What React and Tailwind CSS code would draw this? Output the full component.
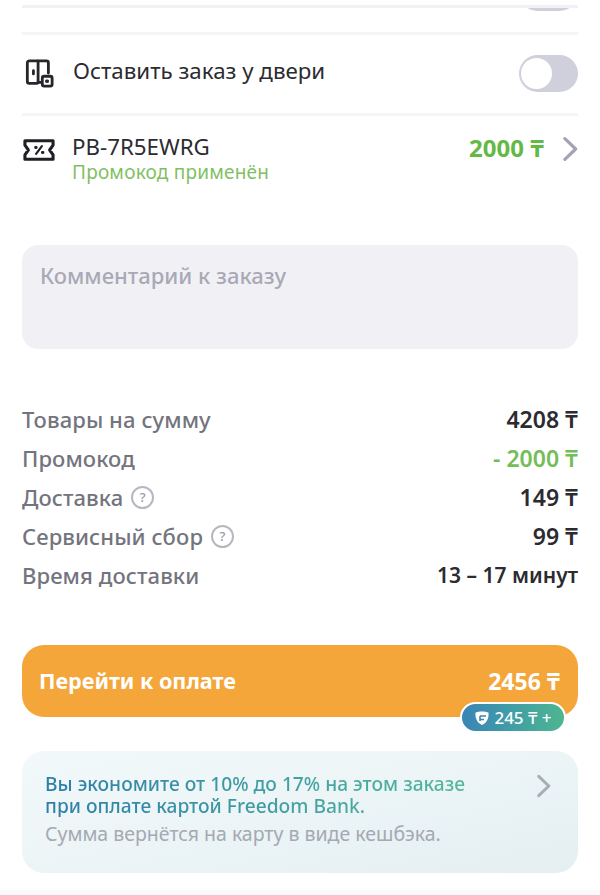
const F = { fontFamily: '"Noto Sans", "Open Sans", sans-serif' };

function Toggle() {
  return (
    <div className="flex h-[37px] w-[59px] shrink-0 items-center rounded-full bg-[#d0d0dd] pl-[2px]">
      <div className="h-[31px] w-[31px] rounded-full bg-white" />
    </div>
  );
}

function Chevron({ className, color = "#a3a3b4" }) {
  return (
    <svg className={className} viewBox="0 0 16 26" fill="none">
      <path d="M2 2L13.5 13L2 24" stroke={color} strokeWidth="3.4" strokeLinecap="round" strokeLinejoin="round" />
    </svg>
  );
}

function Help() {
  return (
    <span className="flex h-[23px] w-[23px] items-center justify-center rounded-full border-2 border-[#b7b7c0] text-[13px] font-medium leading-none text-[#9a9aa4]">
      ?
    </span>
  );
}

function Row({ label, value, help, valueClass = "text-[23px] font-semibold text-[#2b2b30]" }) {
  return (
    <div className="flex h-[39px] items-center justify-between">
      <div className="flex items-center gap-2 text-[22px] font-medium tracking-[0.1px] text-[#74747e]">
        <span>{label}</span>
        {help && <Help />}
      </div>
      <div className={valueClass}>{value}</div>
    </div>
  );
}

export default function App() {
  return (
    <div className="h-[895px] w-[600px] overflow-hidden bg-white" style={F}>
      <div className="mx-[22px]">
        <div className="h-[8px] border-b-[3px] border-[#f1f1f3]" />
        <div className="flex h-[27px] justify-end overflow-hidden border-b-[3px] border-[#f5f5f7]">
          <div className="-mt-[34px]">
            <Toggle />
          </div>
        </div>

        <div className="flex h-[81px] items-start justify-between border-b-[3px] border-[#f5f5f7] pt-[20px]">
          <div className="flex items-center gap-[19px]">
            <svg className="ml-[3px] mt-[3px] h-[30px] w-[29px]" viewBox="0 0 31 31" fill="none" stroke="#26262b" strokeWidth="3" strokeLinejoin="round" strokeLinecap="round">
              <path d="M13 2.500H4.500a2 2 0 0 0-2 2v20a2 2 0 0 0 2 2H13a1 1 0 0 0 1-1V3.500a1 1 0 0 0-1-1Z" />
              <path d="M14 2.500h9a2 2 0 0 1 2 2v11" />
              <path d="M14 25.500h3" />
              <path d="M9 13v3.500" />
              <rect x="18.500" y="19" width="10.500" height="10.500" rx="2" />
              <rect x="22.500" y="23" width="2.500" height="2.500" fill="#26262b" strokeWidth="1" />
            </svg>
            <span className="-mt-[1px] text-[22.300px] leading-none text-[#2b2b30]">Оставить заказ у двери</span>
          </div>
          <Toggle />
        </div>

        <div className="flex h-[69px] justify-between pt-[17px]">
          <div className="flex gap-[17px]">
            <svg className="ml-[1px] mt-[5px] h-[24px] w-[32px]" viewBox="0 0 33 24" fill="none" stroke="#1f1f24" strokeWidth="3.2" strokeLinejoin="round" strokeLinecap="round">
              <path d="M2 2.500h29v4.500l-3.500 5 3.500 5v4.500H2V17l3.500-5L2 7Z" />
              <path d="M13.500 16l6-8" strokeWidth="2.2" />
              <path d="M13 9.500h.6M20 14.500h.6" strokeWidth="3" />
            </svg>
            <div className="flex flex-col">
              <span className="text-[22.300px] leading-[28px] text-[#2b2b30]">PB-7R5EWRG</span>
              <span className="text-[19px] leading-[22px] tracking-[0.2px] text-[#82bf64]">Промокод применён</span>
            </div>
          </div>
          <div className="flex items-start gap-[19px]">
            <span className="text-[24px] font-bold leading-[30px] text-[#63b946]">2000 ₸</span>
            <Chevron className="mt-[3px] h-[26px] w-[15px]" />
          </div>
        </div>

        <div className="mt-[60px] h-[104px] rounded-[16px] bg-[#f1f1f5] px-[18px] py-[15px] text-[22px] font-medium leading-[30px] text-[#a9a9b5]">
          Комментарий к заказу
        </div>

        <div className="mt-[51px]">
          <Row label="Товары на сумму" value="4208 ₸" />
          <Row label="Промокод" value="- 2000 ₸" valueClass="text-[23px] font-semibold text-[#74bd58]" />
          <Row label="Доставка" value="149 ₸" help />
          <Row label="Сервисный сбор" value="99 ₸" help />
          <Row label="Время доставки" value="13 – 17 минут" valueClass="text-[21px] font-semibold text-[#2b2b30]" />
        </div>

        <div className="relative mt-[50px]">
          <div className="flex h-[72px] items-center justify-between rounded-[22px] bg-[#f4a63a] pl-[17px] pr-[18px] text-[21.600px] font-bold text-white">
            <span className="pt-[1px]">Перейти к оплате</span>
            <span className="text-[23px]">2456 ₸</span>
          </div>
          <div className="absolute left-[438px] top-[57px] flex h-[31px] w-[106px] items-center justify-center gap-[4px] rounded-full border-[2px] border-white bg-gradient-to-r from-[#3a85b5] to-[#4db690] text-[17px] font-medium text-white">
            <svg className="h-[16px] w-[16px]" viewBox="0 0 16 16">
              <path d="M1.500 2.500C5 1 11 1 14.500 2.500C15 8 13 13 8 15C3 13 1 8 1.500 2.500Z" fill="#fff" />
              <path d="M6 6h6M6 9.500h4M6 6v5" stroke="#3a85b5" strokeWidth="1.600" fill="none" />
            </svg>
            <span>245 ₸ +</span>
          </div>
        </div>

        <div className="mt-[34px] flex h-[122px] justify-between rounded-[22px] bg-gradient-to-br from-[#f2f9fb] to-[#e5eff1] pl-[23px] pr-[27px] pt-[22px]">
          <div>
            <div className="w-fit bg-gradient-to-r from-[#2e7ea8] to-[#54b89a] bg-clip-text text-[19.200px] font-medium leading-[22px] text-transparent">
              Вы экономите от 10% до 17% на этом заказе
              <br />
              при оплате картой Freedom Bank.
            </div>
            <div className="mt-[6px] text-[19.500px] leading-[22px] text-[#a5a9b2]">Сумма вернётся на карту в виде кешбэка.</div>
          </div>
          <Chevron className="mt-[1px] h-[24px] w-[14px]" color="#a9adb5" />
        </div>
      </div>
      <div className="mt-[17px] h-[5px] bg-[#fafafb]" />
    </div>
  );
}
